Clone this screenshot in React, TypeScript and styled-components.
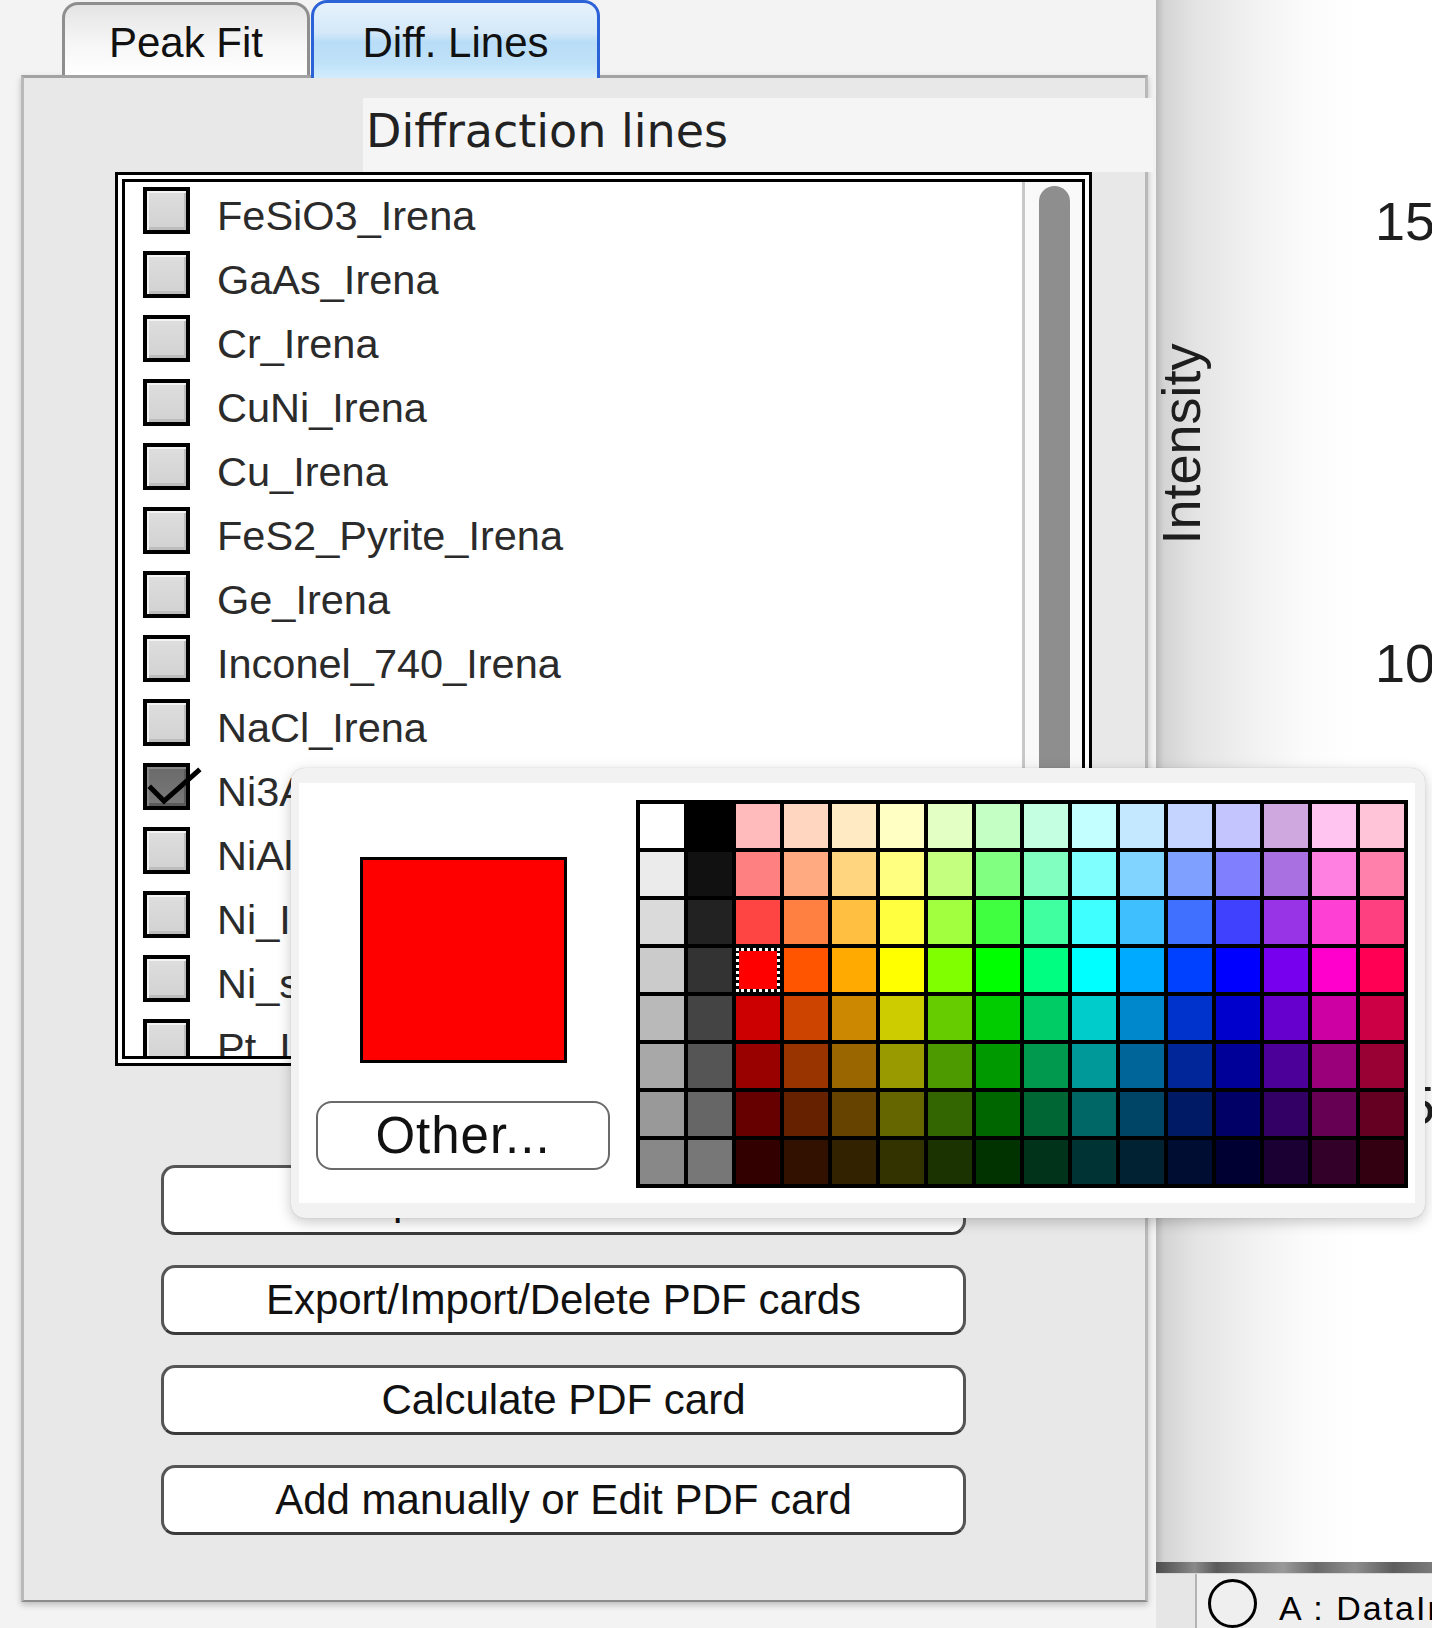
import React from "react";
import styled, { createGlobalStyle } from "styled-components";

const GlobalStyle = createGlobalStyle`
  html, body { margin: 0; padding: 0; }
  body {
    background: #f3f3f3;
    font-family: "Liberation Sans", Arial, sans-serif;
    overflow: hidden;
  }
  * { box-sizing: border-box; }
`;

const Page = styled.div`
  position: relative;
  width: 1432px;
  height: 1628px;
  display: flex;
  overflow: hidden;
  background: #f3f3f3;
`;

const ControlWindow = styled.div`
  width: 1156px;
  flex: none;
  display: flex;
  flex-direction: column;
`;

const TabRow = styled.div`
  position: relative;
  z-index: 2;
  display: flex;
  align-items: flex-end;
  height: 75px;
  padding-left: 62px;
`;

const Tab = styled.div<{ $active?: boolean }>`
  display: flex;
  justify-content: center;
  font-size: 42px;
  line-height: 42px;
  color: #111;
  border: 3px solid ${(p) => (p.$active ? "#2c62d8" : "#8e8e8e")};
  border-bottom: none;
  border-radius: 16px 16px 0 0;
  width: ${(p) => (p.$active ? 289 : 248)}px;
  height: ${(p) => (p.$active ? 78 : 73)}px;
  margin-bottom: ${(p) => (p.$active ? -3 : 0)}px;
  margin-left: ${(p) => (p.$active ? 1 : 0)}px;
  padding-top: ${(p) => (p.$active ? 19 : 17)}px;
  background: ${(p) =>
    p.$active
      ? "linear-gradient(180deg, #e6f2fc 0%, #d3e8f9 40%, #b9ddf7 52%, #bfe2f9 80%, #d2ecfc 100%)"
      : "linear-gradient(180deg, #e4e4e4 0%, #f6f6f6 55%, #ffffff 100%)"};
`;

const Panel = styled.div`
  margin-left: 21px;
  width: 1127px;
  height: 1527px;
  background: #e8e8e8;
  border: 3px solid #b9b9b9;
  border-top-color: #a3a3a3;
  border-bottom: 2px solid #8c8c8c;
  box-shadow: 0 3px 6px rgba(0, 0, 0, 0.22);
  display: flex;
  flex-direction: column;
  padding-top: 20px;
`;

const HeaderBand = styled.div`
  margin-left: 339px;
  margin-right: -8px;
  height: 74px;
  padding: 6px 0 0 3px;
  background: #f5f5f5;
  font-family: "DejaVu Sans", sans-serif;
  font-size: 46px;
  line-height: 54px;
  color: #222;
`;

const ListOuter = styled.div`
  margin-left: 91px;
  width: 977px;
  height: 894px;
  border: 3px solid #000;
  padding: 4px;
  background: #fff;
`;

const ListInner = styled.div`
  height: 100%;
  border: 3px solid #000;
  display: flex;
  overflow: hidden;
`;

const Rows = styled.div`
  flex: 1;
  overflow: hidden;
  padding-left: 18px;
`;

const Row = styled.div`
  height: 64px;
  display: flex;
  align-items: flex-start;
`;

const Box = styled.div<{ $checked?: boolean }>`
  position: relative;
  flex: none;
  width: 47px;
  height: 47px;
  margin-top: 5px;
  border: 4px solid #000;
  background: ${(p) =>
    p.$checked
      ? "linear-gradient(180deg, #6a6a6a, #7a7a7a)"
      : "linear-gradient(180deg, #dedede, #d2d2d2)"};
  box-shadow: inset 2px 2px 0 ${(p) => (p.$checked ? "#888" : "#f2f2f2")},
    inset -2px -3px 0 ${(p) => (p.$checked ? "#5a5a5a" : "#bdbdbd")};
`;

const CheckMark = styled.svg`
  position: absolute;
  left: -4px;
  top: -4px;
  overflow: visible;
`;

const Label = styled.div`
  margin-left: 27px;
  padding-top: 2px;
  font-size: 41.5px;
  line-height: 64px;
  color: #2b2b2b;
  white-space: nowrap;
`;

const ScrollTrack = styled.div`
  width: 60px;
  flex: none;
  border-left: 3px solid #c8c8c8;
  background: #f9f9f9;
  padding: 4px 0 0 14px;
`;

const ScrollThumb = styled.div`
  width: 31px;
  height: 720px;
  border-radius: 16px;
  background: #8e8e8e;
`;

const ButtonColumn = styled.div`
  margin-top: 99px;
  margin-left: 137px;
  display: flex;
  flex-direction: column;
  gap: 30px;
`;

const PanelButton = styled.div`
  width: 805px;
  height: 70px;
  border: 3px solid #555;
  border-bottom-color: #3a3a3a;
  border-radius: 14px;
  background: #fff;
  display: flex;
  align-items: center;
  justify-content: center;
  font-size: 42px;
  color: #111;
  white-space: nowrap;
`;

const GraphWindow = styled.div`
  flex: 1;
  min-width: 0;
  overflow: hidden;
  display: flex;
  flex-direction: column;
  background: linear-gradient(90deg, #b9b9b9 0px, #d4d4d4 8px, #e4e4e4 40px, #f2f2f2 100px, #fbfbfb 150px, #ffffff 200px);
`;

const PlotArea = styled.div`
  position: relative;
  flex: 1;
`;

const AxisTitle = styled.div`
  position: absolute;
  left: 25px;
  top: 444px;
  writing-mode: vertical-rl;
  transform: translate(-50%, -50%) rotate(180deg);
  font-size: 54px;
  line-height: 54px;
  color: #1e1e1e;
  white-space: nowrap;
`;

const Tick = styled.div<{ $y: number }>`
  position: absolute;
  right: -3px;
  top: ${(p) => p.$y - 27}px;
  font-size: 54px;
  line-height: 54px;
  color: #1e1e1e;
`;

const DarkBar = styled.div`
  height: 11px;
  background: linear-gradient(90deg, #4d4d4d 0%, #6e6e6e 8%, #8a8a8a 14%, #5a5a5a 22%, #7b7b7b 34%, #9a9a9a 46%, #6a6a6a 58%, #8e8e8e 72%, #5d5d5d 86%, #7a7a7a 100%);
`;

const InfoStrip = styled.div`
  height: 55px;
  display: flex;
  background: #efefef;
  border-top: 1px solid #d8d8d8;
  overflow: hidden;
`;

const InfoCell = styled.div`
  width: 41px;
  flex: none;
  border-right: 2px solid #b3b3b3;
  background: #e6e6e6;
`;

const TraceMarker = styled.div`
  width: 49px;
  height: 49px;
  margin: 5px 0 0 11px;
  border: 3px solid #000;
  border-radius: 50%;
  flex: none;
`;

const TraceName = styled.div`
  margin-left: 22px;
  font-size: 34px;
  letter-spacing: 2px;
  line-height: 56px;
  padding-top: 6px;
  color: #000;
  white-space: nowrap;
`;

const Popup = styled.div`
  position: absolute;
  z-index: 10;
  left: 291px;
  top: 768px;
  width: 1134px;
  height: 450px;
  padding: 15px 10px 15px 8px;
  background: #f2f2f2;
  border-radius: 14px;
  box-shadow: 0 4px 14px rgba(0, 0, 0, 0.22), 0 0 1px rgba(0, 0, 0, 0.25);
`;

const PopupBody = styled.div`
  height: 100%;
  background: #fff;
  display: flex;
  gap: 26px;
  padding: 17px 7px 15px 17px;
`;

const PreviewColumn = styled.div`
  width: 294px;
  display: flex;
  flex-direction: column;
  align-items: center;
`;

const Preview = styled.div<{ $color: string }>`
  width: 207px;
  height: 206px;
  margin-top: 57px;
  border: 3px solid #000;
  background: ${(p) => p.$color};
`;

const OtherButton = styled.div`
  margin-top: 38px;
  width: 294px;
  height: 69px;
  border: 2px solid #6a6a6a;
  border-radius: 16px;
  background: #fff;
  display: flex;
  align-items: center;
  justify-content: center;
  font-size: 51px;
  letter-spacing: 1px;
  color: #111;
`;

const Palette = styled.div`
  display: grid;
  grid-template-columns: repeat(16, 44px);
  grid-auto-rows: 44px;
  gap: 4px;
  padding: 4px;
  background: #000;
  align-self: flex-start;
`;

const Swatch = styled.div<{ $color: string; $selected?: boolean }>`
  background: ${(p) => p.$color};
  background-clip: padding-box;
  border: ${(p) => (p.$selected ? "3px dotted #fff" : "none")};
`;

const columns: string[][] = [
  ["#ffffff", "#ebebeb", "#dadada", "#cbcbcb", "#b9b9b9", "#a8a8a8", "#999999", "#888888"],
  ["#000000", "#111111", "#222222", "#333333", "#444444", "#555555", "#666666", "#777777"],
  ["#ffbbbb", "#ff8080", "#ff4444", "#ff0000", "#cc0000", "#990000", "#660000", "#330000"],
  ["#ffd6bf", "#ffaa80", "#ff8040", "#ff5500", "#cc4400", "#993300", "#662200", "#331100"],
  ["#ffeac4", "#ffd580", "#ffbf40", "#ffaa00", "#cc8800", "#996600", "#664400", "#332200"],
  ["#ffffc4", "#ffff80", "#ffff40", "#ffff00", "#cccc00", "#999900", "#666600", "#333300"],
  ["#e4ffc4", "#c4ff80", "#a2ff40", "#80ff00", "#66cc00", "#4d9900", "#336600", "#1a3300"],
  ["#c4ffc4", "#80ff80", "#40ff40", "#00ff00", "#00cc00", "#009900", "#006600", "#003300"],
  ["#c4ffe2", "#80ffc0", "#40ffa0", "#00ff80", "#00cc66", "#00994d", "#006633", "#00331a"],
  ["#c4ffff", "#80ffff", "#40ffff", "#00ffff", "#00cccc", "#009999", "#006666", "#003333"],
  ["#c4e8ff", "#80d4ff", "#40bfff", "#00aaff", "#0088cc", "#006699", "#004466", "#002233"],
  ["#c4d4ff", "#80a0ff", "#4070ff", "#0040ff", "#0033cc", "#002699", "#001a66", "#000d33"],
  ["#c4c4ff", "#8080ff", "#4040ff", "#0000ff", "#0000cc", "#000099", "#000066", "#000033"],
  ["#d0a8e0", "#a870e0", "#9933e6", "#7700ee", "#6600cc", "#4d0099", "#330066", "#1a0033"],
  ["#ffc4f0", "#ff80e0", "#ff40d4", "#ff00cc", "#cc00a3", "#99007a", "#660052", "#330029"],
  ["#ffc4d8", "#ff80aa", "#ff4080", "#ff0055", "#cc0044", "#990033", "#660022", "#330011"],
];

const items = [
  "FeSiO3_Irena",
  "GaAs_Irena",
  "Cr_Irena",
  "CuNi_Irena",
  "Cu_Irena",
  "FeS2_Pyrite_Irena",
  "Ge_Irena",
  "Inconel_740_Irena",
  "NaCl_Irena",
  "Ni3Al_Irena",
  "NiAl_Irena",
  "Ni_Irena",
  "Ni_superalloy_Irena",
  "Pt_Irena",
];

const buttons = [
  "Update selected lines",
  "Export/Import/Delete PDF cards",
  "Calculate PDF card",
  "Add manually or Edit PDF card",
];

export default function App() {
  const swatches: { color: string; selected: boolean }[] = [];
  for (let r = 0; r < 8; r++) {
    for (let c = 0; c < 16; c++) {
      swatches.push({ color: columns[c][r], selected: r === 3 && c === 2 });
    }
  }

  return (
    <>
      <GlobalStyle />
      <Page>
        <ControlWindow>
          <TabRow>
            <Tab>Peak Fit</Tab>
            <Tab $active>Diff. Lines</Tab>
          </TabRow>
          <Panel>
            <HeaderBand>Diffraction lines</HeaderBand>
            <ListOuter>
              <ListInner>
                <Rows>
                  {items.map((name) => {
                    const checked = name === "Ni3Al_Irena";
                    return (
                      <Row key={name}>
                        <Box $checked={checked}>
                          {checked && (
                            <CheckMark width="56" height="47" viewBox="0 0 56 47">
                              <path
                                d="M8 25 L21 38 L55 8"
                                fill="none"
                                stroke="#000"
                                strokeWidth="5"
                                strokeLinecap="square"
                              />
                            </CheckMark>
                          )}
                        </Box>
                        <Label>{name}</Label>
                      </Row>
                    );
                  })}
                </Rows>
                <ScrollTrack>
                  <ScrollThumb />
                </ScrollTrack>
              </ListInner>
            </ListOuter>
            <ButtonColumn>
              {buttons.map((b) => (
                <PanelButton key={b}>{b}</PanelButton>
              ))}
            </ButtonColumn>
          </Panel>
        </ControlWindow>

        <GraphWindow>
          <PlotArea>
            <AxisTitle>Intensity</AxisTitle>
            <Tick $y={221}>15</Tick>
            <Tick $y={663}>10</Tick>
            <Tick $y={1105}>5</Tick>
          </PlotArea>
          <DarkBar />
          <InfoStrip>
            <InfoCell />
            <TraceMarker />
            <TraceName>A : DataIn</TraceName>
          </InfoStrip>
        </GraphWindow>

        <Popup>
          <PopupBody>
            <PreviewColumn>
              <Preview $color="#ff0000" />
              <OtherButton>Other...</OtherButton>
            </PreviewColumn>
            <Palette>
              {swatches.map((s, i) => (
                <Swatch key={i} $color={s.color} $selected={s.selected} />
              ))}
            </Palette>
          </PopupBody>
        </Popup>
      </Page>
    </>
  );
}
